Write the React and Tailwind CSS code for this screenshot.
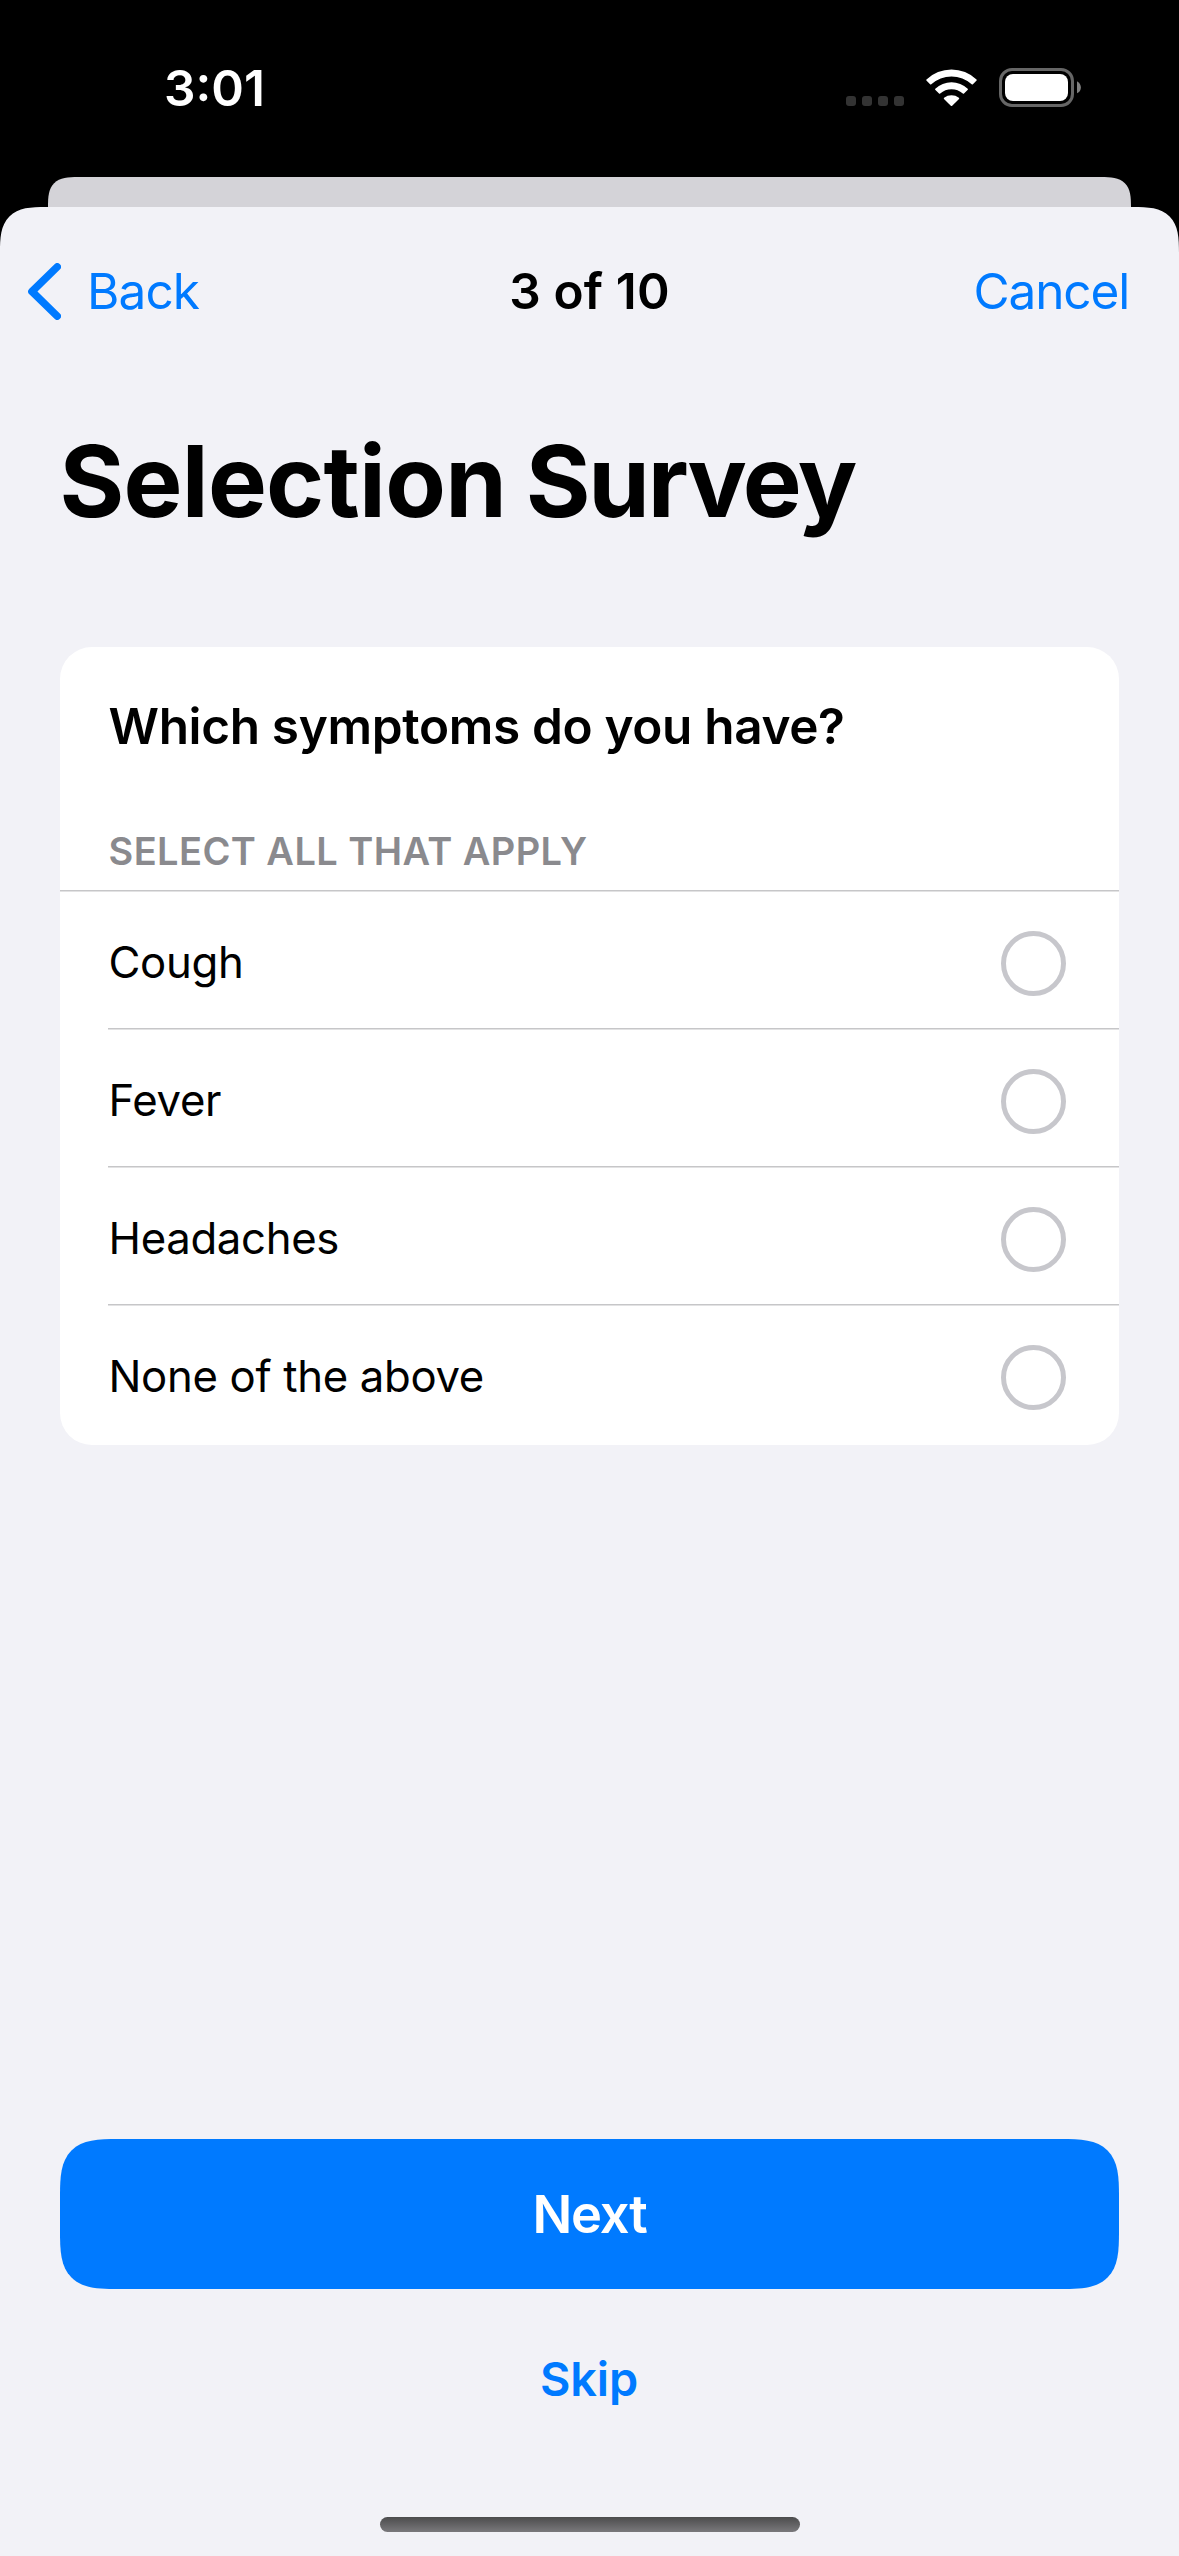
import React, { useState } from "react";

const symptoms = ["Cough", "Fever", "Headaches", "None of the above"];

function StatusBar() {
  return (
    <div className="flex h-[177px] items-center justify-between pr-[98px] pb-px pl-[164px]">
      <span className="mt-px text-[49.5px] leading-none font-semibold text-white">3:01</span>
      <div className="-mt-px flex items-center">
        <div className="mt-[26px] flex gap-[6px]">
          {[0, 1, 2, 3].map((dot) => (
            <span key={dot} className="size-[10px] rounded-[3px] bg-[#333333]" />
          ))}
        </div>
        <svg className="ml-[22px] h-[38px] w-[51px]" viewBox="0 0 51 38" fill="#fff">
          <path d="M0.4 11.6 Q0 11 0.5 10.5 A36 36 0 0 1 50.5 10.5 Q51 11 50.6 11.6 L46.9 15.2 Q46.3 15.8 45.7 15.2 A30 30 0 0 0 5.3 15.2 Q4.7 15.8 4.1 15.2 Z" />
          <path d="M9.2 20.8 Q8.8 20.2 9.3 19.7 A23.5 23.5 0 0 1 41.7 19.7 Q42.2 20.2 41.8 20.8 L38 24.5 Q37.4 25 36.8 24.5 A17 17 0 0 0 14.2 24.5 Q13.6 25 13 24.5 Z" />
          <path d="M18 29.9 Q17.5 29.3 18.1 28.8 A12.5 12.5 0 0 1 32.9 28.8 Q33.5 29.3 33 29.9 L26.2 36.8 Q25.5 37.4 24.8 36.8 Z" />
        </svg>
        <svg className="ml-[22px] h-[39px] w-[82px]" viewBox="0 0 82 39">
          <rect x="1.5" y="1.5" width="72" height="36" rx="11.5" fill="none" stroke="#666" strokeWidth="3" />
          <rect x="6" y="6" width="63" height="27" rx="8" fill="#fff" />
          <path d="M78 13.2 C83.2 15.6 83.2 23.4 78 25.2 Z" fill="#808080" />
        </svg>
      </div>
    </div>
  );
}

function NavBar() {
  return (
    <div className="grid h-[168px] grid-cols-[1fr_auto_1fr] items-center pr-[50px] pl-[50px] text-[49.5px] leading-none">
      <button className="-ml-[22px] flex items-center text-[#007aff]">
        <svg className="h-[57px] w-[33px]" viewBox="0 0 33 57" fill="none" stroke="#007aff" strokeWidth="7.6" strokeLinecap="round" strokeLinejoin="round">
          <path d="M29.2 3.9 L4 28.5 L29.2 53.1" />
        </svg>
        <span className="mt-[2px] ml-[26px] tracking-[-0.9px]">Back</span>
      </button>
      <span className="mt-[2px] text-center font-semibold tracking-[0.14px]">3 of 10</span>
      <button className="mt-[2px] justify-self-end tracking-[-1.15px] text-[#007aff]">Cancel</button>
    </div>
  );
}

function Divider({ className = "" }) {
  return <div className={`h-[2px] bg-[linear-gradient(#c6c6c8_50%,#e2e2e3_50%)] ${className}`} />;
}

function Choice({ label, checked, onToggle }) {
  return (
    <button onClick={onToggle} className="flex h-[136px] w-full items-center justify-between pr-[53px] pl-[48.5px]">
      <span className="mt-[6px] text-[43.7px] leading-none tracking-[-0.33px]">{label}</span>
      <span
        className={`mt-[7px] size-[65px] rounded-full border-[5px] ${checked ? "border-[#007aff] bg-[#007aff]" : "border-[#c7c7cc]"}`}
      />
    </button>
  );
}

function QuestionCard() {
  const [selected, setSelected] = useState([]);
  const toggle = (label) =>
    setSelected((now) => (now.includes(label) ? now.filter((item) => item !== label) : [...now, label]));

  return (
    <section className="mx-[60px] mt-[60px] overflow-hidden rounded-[32px] bg-white pb-[3px]">
      <h2 className="pl-[48.5px] text-[49.5px] leading-[158px] font-semibold tracking-[-0.34px]">
        Which symptoms do you have?
      </h2>
      <div className="flex h-[85px] items-center pt-[6px] pl-[48.5px]">
        <span className="text-[38px] leading-none font-semibold tracking-[0.42px] text-[#8a8a8e]">
          SELECT ALL THAT APPLY
        </span>
      </div>
      {symptoms.map((label, index) => (
        <div key={label}>
          <Divider className={index === 0 ? "" : "ml-[48px]"} />
          <Choice label={label} checked={selected.includes(label)} onToggle={() => toggle(label)} />
        </div>
      ))}
    </section>
  );
}

export default function App() {
  return (
    <div className="flex h-[2556px] w-[1179px] flex-col overflow-hidden bg-black font-[Inter,sans-serif] text-black">
      <StatusBar />
      <div className="mx-[48px] h-[30px] rounded-t-[42px] bg-[#d4d3d8] [corner-shape:superellipse(1.6)]" />
      <main className="flex flex-1 flex-col rounded-t-[46px] bg-[#f2f2f7] [corner-shape:superellipse(1.6)]">
        <NavBar />
        <h1 className="pl-[59.5px] text-[99px] leading-[212px] font-bold tracking-[-0.75px] [word-spacing:-3px]">
          Selection <span className="tracking-[-2.2px]">Survey</span>
        </h1>
        <QuestionCard />
        <footer className="mt-auto flex flex-col px-[60px]">
          <button className="h-[150px] rounded-[58px] bg-[#007aff] text-[52.4px] font-semibold tracking-[-1.2px] text-white [corner-shape:superellipse(1.65)]">
            Next
          </button>
          <button className="h-[180px] pr-px text-[46.8px] font-semibold tracking-[-0.14px] text-[#007aff]">Skip</button>
          <div className="mt-[48px] mb-[24px] h-[15px] w-[420px] self-center rounded-full bg-linear-to-b from-[#4c4c4d] to-[#7a797c]" />
        </footer>
      </main>
    </div>
  );
}
